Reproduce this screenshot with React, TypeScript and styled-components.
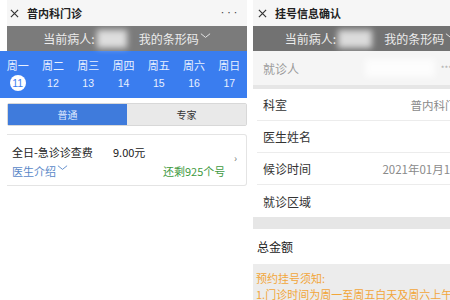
import styled, { createGlobalStyle } from 'styled-components';

const GlobalStyle = createGlobalStyle`
  html, body {
    margin: 0;
    padding: 0;
    background: #ffffff;
  }
  body {
    font-family: 'Noto Sans CJK SC', 'Noto Sans', sans-serif;
    color: #222;
  }
`;

const WEEK = [
  { day: '周一', date: '11' },
  { day: '周二', date: '12' },
  { day: '周三', date: '13' },
  { day: '周四', date: '14' },
  { day: '周五', date: '15' },
  { day: '周六', date: '16' },
  { day: '周日', date: '17' },
];

const INFO = [
  { label: '科室', value: '普内科门诊' },
  { label: '医生姓名', value: '' },
  { label: '候诊时间', value: '2021年01月11日' },
  { label: '就诊区域', value: '' },
];

const CloseIcon = () => (
  <svg width='9' height='9' viewBox='0 0 10 10'>
    <path d='M1 1 L9 9 M9 1 L1 9' stroke='#333' strokeWidth='1.3' fill='none' />
  </svg>
);

const Chevron = () => (
  <svg width='11' height='6' viewBox='0 0 12 6'>
    <path d='M1 0.5 L6 4.5 L11 0.5' stroke='currentColor' strokeWidth='1' fill='none' />
  </svg>
);

export default function App() {
  return (
    <>
      <GlobalStyle />
      <Screen>
        <LeftPhone>
          <TitleBar $inset={7}>
            <CloseIcon />
            <Title>普内科门诊</Title>
            <More>•••</More>
          </TitleBar>
          <PatientBar $inset={7} $tone='#7b7b7b'>
            <span>当前病人:</span>
            <Blur $w={30} />
            <BarCode>
              我的条形码
              <Chevron />
            </BarCode>
          </PatientBar>
          <WeekStrip>
            {WEEK.map((w, i) => (
              <DayCell key={w.day}>
                <span>{w.day}</span>
                <DateNum $active={i === 0}>{w.date}</DateNum>
              </DayCell>
            ))}
          </WeekStrip>
          <Tabs>
            <Tab $active>普通</Tab>
            <Tab>专家</Tab>
          </Tabs>
          <Card>
            <CardRow>
              <FeeName>全日-急诊诊查费</FeeName>
              <Price>9.00元</Price>
            </CardRow>
            <CardRow>
              <DoctorLink>
                医生介绍
                <Chevron />
              </DoctorLink>
              <Remain>还剩925个号</Remain>
            </CardRow>
            <Arrow>›</Arrow>
          </Card>
        </LeftPhone>

        <RightPhone>
          <RightInner>
            <TitleBar $inset={0}>
              <CloseIcon />
              <Title>挂号信息确认</Title>
            </TitleBar>
            <PatientBar $inset={0} $tone='#727272'>
              <span>当前病人:</span>
              <Blur $w={34} />
              <BarCode>
                我的条形码
                <Chevron />
              </BarCode>
            </PatientBar>
            <VisitorRow>
              <MutedLabel>就诊人</MutedLabel>
              <Blur $w={70} />
              <Stars>***</Stars>
            </VisitorRow>
            <Band $h={4} />
            {INFO.map((r, i) => (
              <InfoRow key={r.label} $last={i === INFO.length - 1}>
                <Label>{r.label}</Label>
                <Value>{r.value}</Value>
              </InfoRow>
            ))}
            <Band $h={12} />
            <TotalRow>总金额</TotalRow>
            <Notice>
              <div>预约挂号须知:</div>
              <div>1.门诊时间为周一至周五白天及周六上午</div>
            </Notice>
          </RightInner>
        </RightPhone>
      </Screen>
    </>
  );
}

const Screen = styled.div`
  display: flex;
  gap: 6px;
  width: 450px;
  height: 300px;
  overflow: hidden;
  background: #fff;
`;

const LeftPhone = styled.div`
  width: 247px;
  flex-shrink: 0;
  display: flex;
  flex-direction: column;
`;

const RightPhone = styled.div`
  flex: 1;
  min-width: 0;
  overflow: hidden;
`;

const RightInner = styled.div`
  width: 235px;
  display: flex;
  flex-direction: column;
`;

const TitleBar = styled.div<{ $inset: number }>`
  height: 26px;
  margin-left: ${(p) => p.$inset}px;
  padding-left: ${(p) => (p.$inset ? 3 : 5)}px;
  background: #f6f6f6;
  display: flex;
  align-items: center;
  gap: 8px;
  box-sizing: border-box;
`;

const Title = styled.span`
  font-size: 11px;
  font-weight: 700;
  color: #222;
`;

const More = styled.span`
  margin-left: auto;
  margin-right: 8px;
  font-size: 6px;
  letter-spacing: 0.5px;
  color: #333;
  margin-top: -2px;
`;

const PatientBar = styled.div<{ $inset: number; $tone: string }>`
  height: 25px;
  margin-left: ${(p) => p.$inset}px;
  background: ${(p) => p.$tone};
  color: #ececec;
  font-size: 12px;
  display: flex;
  align-items: center;
  justify-content: center;
`;

const Blur = styled.span<{ $w: number }>`
  width: ${(p) => p.$w}px;
  height: 18px;
  margin: 0 6px 0 2px;
  background: rgba(255, 255, 255, 0.75);
  filter: blur(3px);
`;

const BarCode = styled.span`
  display: inline-flex;
  align-items: center;
  gap: 1px;
  margin-left: 6px;
  svg {
    margin-top: -6px;
  }
`;

const WeekStrip = styled.div`
  height: 47px;
  background: #3a7def;
  display: grid;
  grid-template-columns: repeat(7, 1fr);
  align-items: center;
`;

const DayCell = styled.div`
  display: flex;
  flex-direction: column;
  align-items: center;
  gap: 2px;
  color: #e8f0ff;
  font-size: 11px;
  line-height: 15px;
`;

const DateNum = styled.span<{ $active?: boolean }>`
  width: 16px;
  height: 16px;
  border-radius: 50%;
  display: flex;
  align-items: center;
  justify-content: center;
  font-size: 10.5px;
  font-family: 'Liberation Sans', sans-serif;
  background: ${(p) => (p.$active ? '#fff' : 'transparent')};
  color: ${(p) => (p.$active ? '#3a7def' : '#e8f0ff')};
`;

const Tabs = styled.div`
  margin: 5px 0 0 7px;
  height: 23px;
  display: flex;
  border: 1px solid #d8d8d8;
  border-radius: 2px;
  box-sizing: border-box;
`;

const Tab = styled.div<{ $active?: boolean }>`
  flex: 1;
  display: flex;
  align-items: center;
  justify-content: center;
  font-size: 10px;
  background: ${(p) => (p.$active ? '#3f7bdc' : '#e9e9e9')};
  color: ${(p) => (p.$active ? '#dfe9ff' : '#333')};
`;

const Card = styled.div`
  position: relative;
  margin: 8px 0 0 7px;
  height: 52px;
  border: 1px solid #e4e4e4;
  border-left: none;
  border-radius: 0 3px 3px 0;
  box-sizing: border-box;
  padding: 8px 0 0 5px;
  display: flex;
  flex-direction: column;
  gap: 2px;
`;

const CardRow = styled.div`
  display: flex;
  align-items: center;
  height: 17px;
`;

const FeeName = styled.span`
  font-size: 11px;
  color: #222;
  width: 101px;
`;

const Price = styled.span`
  font-size: 11px;
  color: #222;
`;

const DoctorLink = styled.span`
  display: inline-flex;
  align-items: center;
  gap: 1px;
  font-size: 11px;
  color: #5a88c8;
  width: 151px;
  svg {
    margin-top: -5px;
  }
`;

const Remain = styled.span`
  font-size: 11px;
  color: #3f9a3f;
`;

const Arrow = styled.span`
  position: absolute;
  right: 9px;
  top: 15px;
  font-size: 10px;
  color: #777;
`;

const VisitorRow = styled.div`
  height: 34px;
  background: #f5f5f5;
  display: flex;
  align-items: center;
  padding-left: 10px;
`;

const MutedLabel = styled.span`
  font-size: 12px;
  color: #9a9a9a;
  margin-right: auto;
`;

const Stars = styled.span`
  font-size: 8px;
  color: #aaa;
  margin-right: 36px;
`;

const Band = styled.div<{ $h: number }>`
  height: ${(p) => p.$h}px;
  background: #e6e6e6;
`;

const InfoRow = styled.div<{ $last?: boolean }>`
  height: 32px;
  margin-left: 4px;
  padding: 0 20px 0 6px;
  display: flex;
  align-items: center;
  justify-content: space-between;
  border-bottom: ${(p) => (p.$last ? 'none' : '1px solid #ececec')};
  box-sizing: border-box;
`;

const Label = styled.span`
  font-size: 12px;
  color: #333;
`;

const Value = styled.span`
  font-size: 11.5px;
  color: #8a8a8a;
`;

const TotalRow = styled.div`
  height: 35px;
  padding-left: 4px;
  display: flex;
  align-items: center;
  font-size: 12px;
  color: #222;
`;

const Notice = styled.div`
  height: 40px;
  background: #ececec;
  padding: 6px 0 0 3px;
  box-sizing: border-box;
  font-size: 11px;
  line-height: 16px;
  color: #f2a63a;
  white-space: nowrap;
`;
